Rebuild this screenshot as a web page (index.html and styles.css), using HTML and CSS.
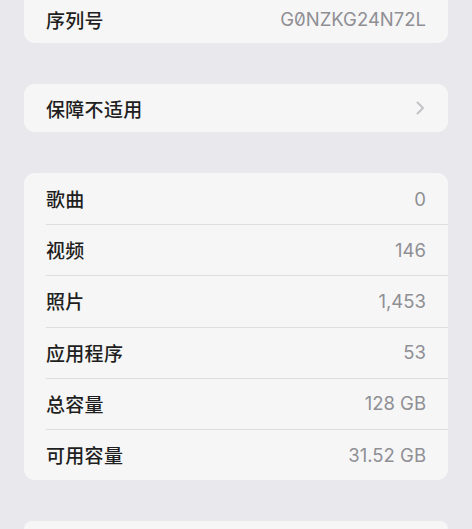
FILE: index.html
```html
<!DOCTYPE html>
<html lang="zh">
<head>
<meta charset="utf-8">
<link rel="stylesheet" href="styles.css">
</head>
<body>
<div class="page">
  <div class="card card-top">
    <div class="row short"><span class="label">序列号</span><span class="value serial">G0NZKG24N72L</span></div>
  </div>
  <div class="card">
    <div class="row short"><span class="label">保障不适用</span>
      <svg class="chev" width="9" height="14" viewBox="0 0 9 14"><path d="M1.5 1.5 L7 7 L1.5 12.5" fill="none" stroke="#c3c3c8" stroke-width="2" stroke-linecap="round" stroke-linejoin="round"/></svg>
    </div>
  </div>
  <div class="card">
    <div class="row"><span class="label">歌曲</span><span class="value">0</span></div>
    <div class="row"><span class="label">视频</span><span class="value">146</span></div>
    <div class="row"><span class="label">照片</span><span class="value">1,453</span></div>
    <div class="row"><span class="label">应用程序</span><span class="value">53</span></div>
    <div class="row"><span class="label">总容量</span><span class="value">128 GB</span></div>
    <div class="row"><span class="label">可用容量</span><span class="value">31.52 GB</span></div>
  </div>
  <div class="card card-bottom"></div>
</div>
</body>
</html>
```
FILE: styles.css
```css
html, body {
  margin: 0;
  padding: 0;
  background: #e9e8ed;
  overflow: hidden;
}
body {
  width: 472px;
  height: 529px;
  font-family: "Inter", "Noto Sans CJK SC", sans-serif;
}
.page {
  padding: 0 24px;
  display: flex;
  flex-direction: column;
  gap: 41px;
}
.card {
  background: #f6f6f7;
  border-radius: 11px;
  overflow: hidden;
}
.card-top {
  margin-top: -5px;
  border-radius: 0 0 11px 11px;
}
.card-bottom {
  height: 8px;
  border-radius: 11px 11px 0 0;
}
.row {
  height: 51.2px;
  display: flex;
  align-items: center;
  justify-content: space-between;
  padding: 0 22px 0 22px;
  position: relative;
}
.row.short {
  height: 48px;
}
.row + .row::before {
  content: "";
  position: absolute;
  left: 22px;
  right: 0;
  top: 0;
  height: 1px;
  background: #dedee1;
}
.label {
  font-family: "Noto Sans CJK SC", sans-serif;
  font-size: 19px;
  font-weight: 500;
  color: #1f1f21;
  letter-spacing: 0.3px;
}
.value {
  font-family: "Inter", "Noto Sans", sans-serif;
  font-size: 18.5px;
  color: #8f8f94;
}
.serial {
  font-feature-settings: "zero" 1;
}
.chev {
  margin-right: 1px;
}
```
